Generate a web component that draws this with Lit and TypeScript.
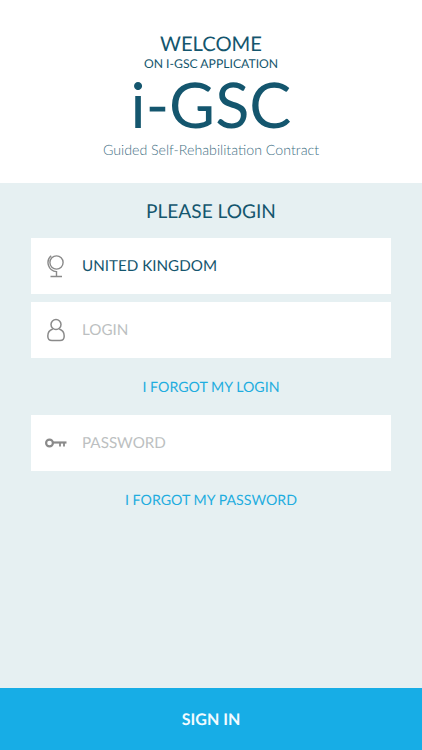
import { LitElement, html, css } from "lit";
import { customElement } from "lit/decorators.js";

@customElement("app-root")
export class AppRoot extends LitElement {
  static styles = css`
    :host { display: flex; flex-direction: column; width: 422px; height: 750px; font-family: Lato, sans-serif; color: #14566e; background: #e6f0f2; overflow: hidden; text-rendering: geometricPrecision; }
    header { height: 183px; background: #fff; display: flex; flex-direction: column; align-items: center; padding-top: 32px; box-sizing: border-box; }
    .welcome { font-size: 20.2px; line-height: 24px; }
    .on { font-size: 12.2px; line-height: 14px; margin-top: 1px; }
    .logo { font-size: 63px; line-height: 52px; font-weight: 400; margin-top: 8px; }
    .sub { font-size: 14.2px; line-height: 18px; font-weight: 300; color: #3f6f84; margin-top: 11px; }
    main { flex: 1; display: flex; flex-direction: column; align-items: center; }
    h1 { margin: 17px 0 14px; font-size: 19.1px; line-height: 24px; font-weight: 400; }
    .field { width: 360px; height: 56px; background: #fff; display: flex; align-items: center; box-sizing: border-box; font-size: 15.2px; }
    .field + .field { margin-top: 8px; }
    .ico { width: 50px; margin-right: 1px; flex: none; display: flex; justify-content: center; }
    .ico svg { display: block; }
    .ph { color: #bcbfc1; }
    .val { color: #14566e; }
    .link { font-size: 14.2px; line-height: 18px; color: #1faddf; margin: 21px 0 18px; }
    .link.last { margin: 21px 0 0; }
    .sign { height: 62px; box-sizing: border-box; background: #17ade6; color: #f2fbff; display: flex; align-items: center; justify-content: center; font-size: 16px; font-weight: 700; flex: none; }
  `;

  render() {
    return html`
      <header>
        <div class="welcome">WELCOME</div>
        <div class="on">ON I-GSC APPLICATION</div>
        <div class="logo">i-GSC</div>
        <div class="sub">Guided Self-Rehabilitation Contract</div>
      </header>
      <main>
        <h1>PLEASE LOGIN</h1>
        <div class="field">
          <span class="ico">
            <svg width="20" height="24" viewBox="0 0 20 24" fill="none" stroke="#8a8a8a" stroke-width="1.4">
              <circle cx="10.5" cy="8.5" r="6.6" />
              <path d="M5.2 1.8 A9 9 0 0 0 10.5 17.6 V22 M4.5 22.5 H16" />
            </svg>
          </span>
          <span class="val">UNITED KINGDOM</span>
        </div>
        <div class="field">
          <span class="ico">
            <svg width="20" height="24" viewBox="0 0 20 24" fill="none" stroke="#8a8a8a" stroke-width="1.5">
              <circle cx="10" cy="6.5" r="5" />
              <path d="M6.8 11 C3.6 12 1.8 14.6 1.8 18 C1.8 21 3.4 22.6 6 22.6 H14 C16.6 22.6 18.2 21 18.2 18 C18.2 14.6 16.4 12 13.2 11" />
            </svg>
          </span>
          <span class="ph">LOGIN</span>
        </div>
        <div class="link">I FORGOT MY LOGIN</div>
        <div class="field">
          <span class="ico">
            <svg width="22" height="10" viewBox="0 0 22 10" fill="none" stroke="#8a8a8a">
              <circle cx="4.5" cy="5" r="3.4" stroke-width="2.2" />
              <path d="M8 4.5 H21.5" stroke-width="2.2" />
              <path d="M15 4.5 V8.5 M19 4.5 V8.5" stroke-width="1.8" />
            </svg>
          </span>
          <span class="ph">PASSWORD</span>
        </div>
        <div class="link last">I FORGOT MY PASSWORD</div>
      </main>
      <div class="sign">SIGN IN</div>
    `;
  }
}
